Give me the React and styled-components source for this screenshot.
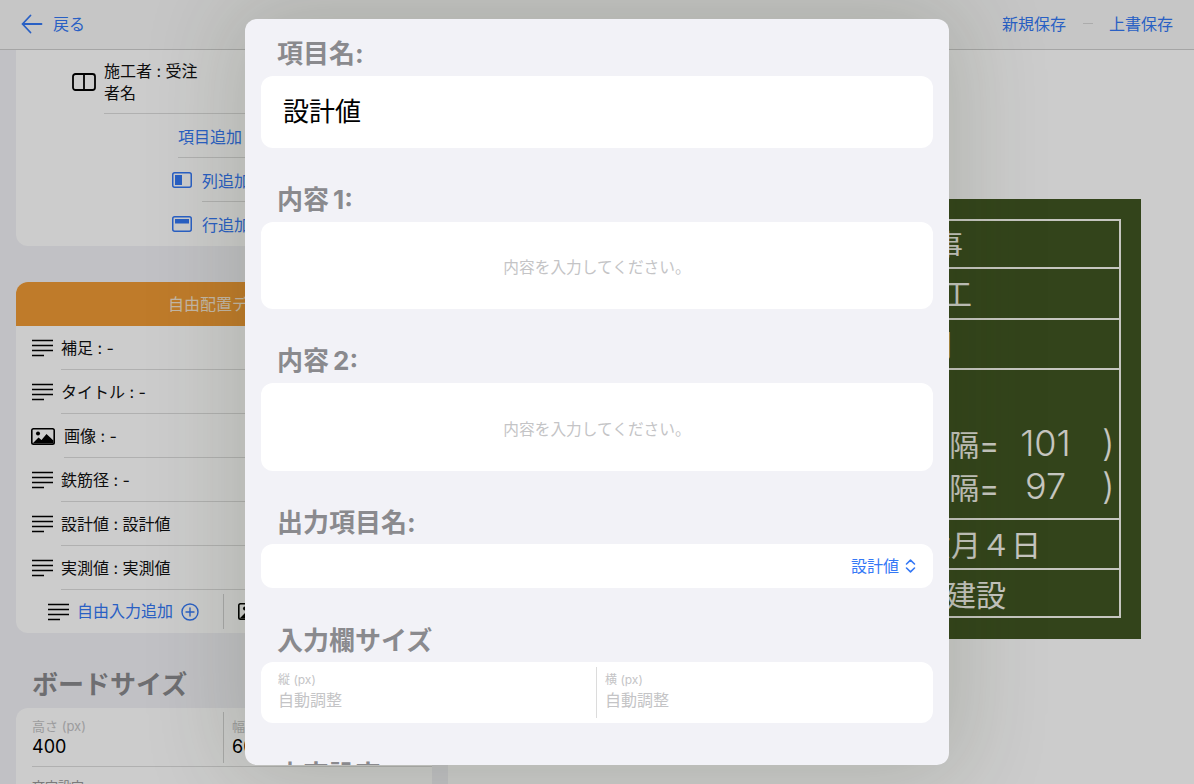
import React from 'react';
import styled, { createGlobalStyle } from 'styled-components';

const GlobalStyle = createGlobalStyle`
    html, body {
        margin: 0;
        padding: 0;
    }
    * {
        box-sizing: border-box;
    }
`

const BLUE = '#3478f6';

// Icons
const BackIcon = () => (
    <svg width="22" height="20" viewBox="0 0 22 20" fill="none" stroke={BLUE} strokeWidth="1.8" strokeLinecap="round" strokeLinejoin="round">
        <path d="M1.5 10H20.5M9.5 1.5L1.5 10L9.5 18.5" />
    </svg>
);

const ColumnsIcon = () => (
    <svg width="24" height="18" viewBox="0 0 24 18" fill="none" stroke="#000" strokeWidth="1.8">
        <rect x="1" y="1" width="22" height="16" rx="2.5" />
        <path d="M12 1V17" />
    </svg>
);

const AddColumnIcon = () => (
    <svg width="20" height="16" viewBox="0 0 20 16" fill="none">
        <rect x="0.75" y="0.75" width="18.5" height="14.5" rx="2" stroke={BLUE} strokeWidth="1.5" />
        <rect x="3" y="3" width="7" height="10" fill={BLUE} />
    </svg>
);

const AddRowIcon = () => (
    <svg width="20" height="16" viewBox="0 0 20 16" fill="none">
        <rect x="0.75" y="0.75" width="18.5" height="14.5" rx="2" stroke={BLUE} strokeWidth="1.5" />
        <rect x="3" y="3" width="14" height="4.5" fill={BLUE} />
    </svg>
);

const LinesIcon = () => (
    <svg width="22" height="18" viewBox="0 0 22 18" fill="none" stroke="#000" strokeWidth="1.4">
        <path d="M1 1.5H22M1 6.5H22M1 11.5H22M1 16.5H13" />
    </svg>
);

const ImageIcon = () => (
    <svg width="24" height="17" viewBox="0 0 24 17">
        <rect x="0" y="0" width="24" height="17" rx="2.5" fill="#000" />
        <rect x="1.6" y="1.6" width="20.8" height="13.8" rx="1" fill="#fff" />
        <circle cx="7" cy="5.5" r="2" fill="#000" />
        <path d="M1.6 15.4L7.5 9.5L10.5 12L15.5 6L22.4 12.5V15.4Z" fill="#000" />
    </svg>
);

const PlusCircleIcon = () => (
    <svg width="18" height="18" viewBox="0 0 18 18" fill="none" stroke={BLUE} strokeWidth="1.4" strokeLinecap="round">
        <circle cx="9" cy="9" r="8" />
        <path d="M9 5V13M5 9H13" />
    </svg>
);

const UpDownIcon = () => (
    <svg width="11" height="14" viewBox="0 0 11 14" fill="none" stroke={BLUE} strokeWidth="1.6" strokeLinecap="round" strokeLinejoin="round">
        <path d="M1.5 5L5.5 1.2L9.5 5M1.5 9L5.5 12.8L9.5 9" />
    </svg>
);

const freeItems = [
    { id: 'note', text: '補足 : -' },
    { id: 'title', text: 'タイトル : -' },
    { id: 'image', text: '画像 : -', image: true },
    { id: 'rebar', text: '鉄筋径 : -' },
    { id: 'design', text: '設計値 : 設計値' },
    { id: 'actual', text: '実測値 : 実測値' },
];

const App = () => {
    return (
        <Screen>
            <GlobalStyle />
            <Header>
                <BackButton><BackIcon /><HeaderLink>戻る</HeaderLink></BackButton>
                <HeaderActions>
                    <HeaderLink>新規保存</HeaderLink>
                    <HeaderDash />
                    <HeaderLink>上書保存</HeaderLink>
                </HeaderActions>
            </Header>

            <Main>
                <Sidebar>
                    <FlatCard>
                        <ColumnRow>
                            <ColumnIconSlot><ColumnsIcon /></ColumnIconSlot>
                            <ColumnBody><ColumnText>施工者 : 受注者名</ColumnText></ColumnBody>
                        </ColumnRow>
                        <ActionRow $indent={162}>
                            <ActionBody>項目追加</ActionBody>
                        </ActionRow>
                        <ActionRow $indent={156}>
                            <AddColumnIcon />
                            <ActionBody $lead={10}>列追加</ActionBody>
                        </ActionRow>
                        <ActionRow $indent={156} $last>
                            <AddRowIcon />
                            <ActionBody $lead={10} $last>行追加</ActionBody>
                        </ActionRow>
                    </FlatCard>

                    <OrangeCard>
                        <OrangeHeader>自由配置データ</OrangeHeader>
                        {freeItems.map(item => (
                            <ListRow key={item.id}>
                                {item.image ? <ImageIcon /> : <LinesIcon />}
                                <ListBody $wide={item.image}>{item.text}</ListBody>
                            </ListRow>
                        ))}
                        <AddFooter>
                            <AddFooterCell $divider>
                                <LinesIcon />
                                <AddLabel>自由入力追加</AddLabel>
                                <PlusCircleIcon />
                            </AddFooterCell>
                            <AddFooterCell $image>
                                <ImageIcon />
                                <AddLabel>画像追加</AddLabel>
                                <PlusCircleIcon />
                            </AddFooterCell>
                        </AddFooter>
                    </OrangeCard>

                    <SideHeading>ボードサイズ</SideHeading>
                    <SizeCard>
                        <SizeRow>
                            <SizeCell $divider>
                                <SizeCaption>高さ (px)</SizeCaption>
                                <SizeValue>400</SizeValue>
                            </SizeCell>
                            <SizeCell $right>
                                <SizeCaption>幅 (px)</SizeCaption>
                                <SizeValue>600</SizeValue>
                            </SizeCell>
                        </SizeRow>
                        <SizeNote>文字設定</SizeNote>
                    </SizeCard>
                </Sidebar>

                <Canvas>
                    <Board>
                        <BoardTable>
                            <BoardRow $height={48} $inset={156}>工事名　鉄筋工事</BoardRow>
                            <BoardRow $height={51} $inset={147}>工種　配筋工</BoardRow>
                            <BoardRow $height={50} $inset={167}>測点　第一区間</BoardRow>
                            <BoardRow $height={150} $tall>
                                <SpacingLine>
                                    <SpacingLabel>（設計間隔=</SpacingLabel>
                                    <SpacingValue>101</SpacingValue>
                                    <SpacingParen>)</SpacingParen>
                                </SpacingLine>
                                <SpacingLine>
                                    <SpacingLabel>（実測間隔=</SpacingLabel>
                                    <SpacingValue>97</SpacingValue>
                                    <SpacingParen>)</SpacingParen>
                                </SpacingLine>
                            </BoardRow>
                            <BoardRow $height={50} $inset={78}>令和三年六月４日</BoardRow>
                            <BoardRow $height={48} $inset={113} $last>受注者建設</BoardRow>
                        </BoardTable>
                    </Board>
                </Canvas>
            </Main>

            <Dimmer />

            <Sheet>
                <FieldLabel $top={17}>項目名:</FieldLabel>
                <NameInput>設計値</NameInput>

                <FieldLabel>内容{'\u2009'}1:</FieldLabel>
                <AreaInput $height={87}>内容を入力してください。</AreaInput>

                <FieldLabel>内容{'\u2009'}2:</FieldLabel>
                <AreaInput $height={88}>内容を入力してください。</AreaInput>

                <FieldLabel $bottom={5}>出力項目名:</FieldLabel>
                <SelectInput><SelectText>設計値</SelectText><UpDownIcon /></SelectInput>

                <FieldLabel $top={35} $bottom={5}>入力欄サイズ</FieldLabel>
                <SplitInput>
                    <SplitCell $divider>
                        <SplitCaption>縦 (px)</SplitCaption>
                        <SplitPlaceholder>自動調整</SplitPlaceholder>
                    </SplitCell>
                    <SplitCell>
                        <SplitCaption>横 (px)</SplitCaption>
                        <SplitPlaceholder>自動調整</SplitPlaceholder>
                    </SplitCell>
                </SplitInput>

                <FieldLabel>文字設定</FieldLabel>
            </Sheet>
        </Screen>
    );
}

export default App;

const Screen = styled.div`
    position: relative;
    width: 1194px;
    height: 784px;
    overflow: hidden;
    display: flex;
    flex-direction: column;
    background-color: #fff;
    color: #000;
    font-family: Inter, "Noto Sans CJK JP", sans-serif;
`

const Header = styled.header`
    flex: none;
    height: 50px;
    display: flex;
    align-items: center;
    justify-content: space-between;
    padding: 0 21px 2px 21px;
    background-color: #f8f8f8;
    border-bottom: 1px solid #cfcfcf;
`

const BackButton = styled.div`
    display: flex;
    align-items: center;
    gap: 10px;
`

const HeaderActions = styled.div`
    display: flex;
    align-items: center;
`

const HeaderLink = styled.div`
    padding-bottom: 2px;
    font-size: 16px;
    color: ${BLUE};
`

const HeaderDash = styled.div`
    width: 10px;
    height: 1px;
    margin: 0 16px 0 17px;
    background-color: #d8d8d8;
`

const Main = styled.div`
    flex: 1;
    min-height: 0;
    display: flex;
`

const Sidebar = styled.div`
    flex: none;
    width: 448px;
    padding: 0 16px;
    overflow: hidden;
    background-color: #f2f2f7;
`

const FlatCard = styled.div`
    height: 196px;
    background-color: #fff;
    border-radius: 0 0 12px 12px;
`

const ColumnRow = styled.div`
    height: 64px;
    display: flex;
    align-items: center;
    padding-left: 56px;
`

const ColumnIconSlot = styled.div`
    flex: none;
    display: flex;
    margin-right: 8px;
`

const ColumnBody = styled.div`
    flex: 1;
    height: 64px;
    padding-top: 10px;
    border-bottom: 1px solid #dcdcdc;
`

const ColumnText = styled.div`
    width: 96px;
    font-size: 16px;
    line-height: 22px;
    color: #111;
`

const ActionRow = styled.div`
    height: 44px;
    display: flex;
    align-items: center;
    margin-left: ${props => props.$indent}px;
`

const ActionBody = styled.div`
    flex: 1;
    height: 44px;
    display: flex;
    align-items: center;
    margin-left: ${props => props.$lead || 0}px;
    font-size: 16px;
    color: ${BLUE};
    border-bottom: ${props => props.$last ? 'none' : '1px solid #dcdcdc'};
`

const OrangeCard = styled.div`
    margin-top: 36px;
    height: 351px;
    border-radius: 12px;
    overflow: hidden;
    background-color: #fff;
`

const OrangeHeader = styled.div`
    height: 44px;
    display: flex;
    align-items: center;
    justify-content: center;
    padding-bottom: 2px;
    font-size: 16px;
    color: #f5e5d0;
    background-color: #ef9a35;
`

const ListRow = styled.div`
    height: 44px;
    display: flex;
    align-items: center;
    padding-left: 15px;
`

const ListBody = styled.div`
    flex: 1;
    height: 44px;
    display: flex;
    align-items: center;
    margin-left: ${props => props.$wide ? 9 : 8}px;
    padding-bottom: 2px;
    font-size: 16px;
    color: #111;
    border-bottom: 1px solid #dcdcdc;
`

const AddFooter = styled.div`
    height: 43px;
    display: flex;
    align-items: center;
`

const AddFooterCell = styled.div`
    flex: none;
    width: 50%;
    height: 35px;
    display: flex;
    align-items: center;
    gap: 8px;
    padding-left: ${props => props.$image ? 14 : 31}px;
    border-right: ${props => props.$divider ? '1px solid #d4d4d4' : 'none'};
`

const AddLabel = styled.div`
    padding-bottom: 3px;
    font-size: 16px;
    color: ${BLUE};
`

const SideHeading = styled.h2`
    margin: 33px 0 0 16px;
    height: 42px;
    font-size: 26px;
    line-height: 38px;
    font-weight: 700;
    color: #8a8a8e;
`

const SizeCard = styled.div`
    height: 200px;
    padding: 4px 0 0 16px;
    background-color: #fff;
    border-radius: 12px;
`

const SizeRow = styled.div`
    height: 55px;
    display: flex;
    border-bottom: 1px solid #dcdcdc;
`

const SizeCell = styled.div`
    flex: none;
    width: ${props => props.$right ? 208 : 192}px;
    height: 51px;
    padding-left: ${props => props.$right ? 8 : 0}px;
    border-right: ${props => props.$divider ? '1px solid #d4d4d4' : 'none'};
`

const SizeCaption = styled.div`
    margin-top: 5px;
    font-size: 13px;
    line-height: 18px;
    color: #c4c4c6;
`

const SizeValue = styled.div`
    font-size: 18px;
    line-height: 24px;
`

const SizeNote = styled.div`
    margin-top: 9px;
    font-size: 13px;
    color: #999;
`

const Canvas = styled.div`
    flex: 1;
    display: flex;
    align-items: center;
    justify-content: center;
    padding-top: 4px;
    background-color: #fff;
`

const Board = styled.div`
    width: 640px;
    height: 440px;
    padding: 20px;
    background-color: #405622;
`

const BoardTable = styled.div`
    height: 399px;
    display: flex;
    flex-direction: column;
    border: 2px solid #f8f8f0;
`

const BoardRow = styled.div`
    flex: none;
    height: ${props => props.$height}px;
    display: flex;
    flex-direction: ${props => props.$tall ? 'column' : 'row'};
    align-items: ${props => props.$tall ? 'flex-end' : 'center'};
    justify-content: flex-end;
    padding-right: ${props => props.$inset || 0}px;
    padding-bottom: ${props => props.$tall ? 11 : 3}px;
    font-size: 30px;
    white-space: nowrap;
    color: #f8f8f0;
    border-bottom: ${props => props.$last ? 'none' : '2px solid #f8f8f0'};
`

const SpacingLine = styled.div`
    height: 43px;
    display: flex;
    align-items: center;
`

const SpacingLabel = styled.div`
    width: 200px;
    text-align: right;
`

const SpacingValue = styled.div`
    width: 103px;
    padding-right: 10px;
    text-align: center;
    font-size: 36px;
    font-weight: 300;
`

const SpacingParen = styled.div`
    width: 17px;
    font-size: 36px;
    font-weight: 300;
`

const Dimmer = styled.div`
    position: absolute;
    inset: 0;
    background-color: rgba(0, 0, 0, 0.2);
`

const Sheet = styled.div`
    position: absolute;
    left: 245px;
    top: 19px;
    width: 704px;
    height: 746px;
    padding: 0 16px;
    overflow: hidden;
    background-color: #f2f2f7;
    border-radius: 12px;
    box-shadow: 0 0 90px 12px rgba(40, 55, 20, 0.17);
`

const FieldLabel = styled.div`
    height: 34px;
    margin: ${props => props.$top ?? 34}px 0 ${props => props.$bottom ?? 6}px;
    padding-left: 16px;
    font-size: 26px;
    line-height: 36px;
    font-weight: 700;
    color: #8a8a8e;
`

const InputBox = styled.div`
    display: flex;
    align-items: center;
    background-color: #fff;
    border-radius: 12px;
`

const NameInput = styled(InputBox)`
    height: 72px;
    padding: 0 0 5px 22px;
    font-size: 26px;
`

const AreaInput = styled(InputBox)`
    height: ${props => props.$height}px;
    justify-content: center;
    padding-top: 2px;
    font-size: 15.7px;
    color: #c4c4c6;
`

const SelectInput = styled(InputBox)`
    height: 44px;
    justify-content: flex-end;
    gap: 6px;
    padding-right: 17px;
`

const SelectText = styled.span`
    padding-bottom: 2px;
    font-size: 16px;
    color: ${BLUE};
`

const SplitInput = styled(InputBox)`
    height: 61px;
`

const SplitCell = styled.div`
    flex: none;
    width: 50%;
    height: 51px;
    padding-left: ${props => props.$divider ? 17 : 8}px;
    border-right: ${props => props.$divider ? '1px solid #dcdcdc' : 'none'};
`

const SplitCaption = styled.div`
    margin-top: 5px;
    font-size: 12px;
    line-height: 16px;
    color: #c4c4c6;
`

const SplitPlaceholder = styled.div`
    font-size: 16px;
    line-height: 24px;
    color: #c4c4c6;
`
